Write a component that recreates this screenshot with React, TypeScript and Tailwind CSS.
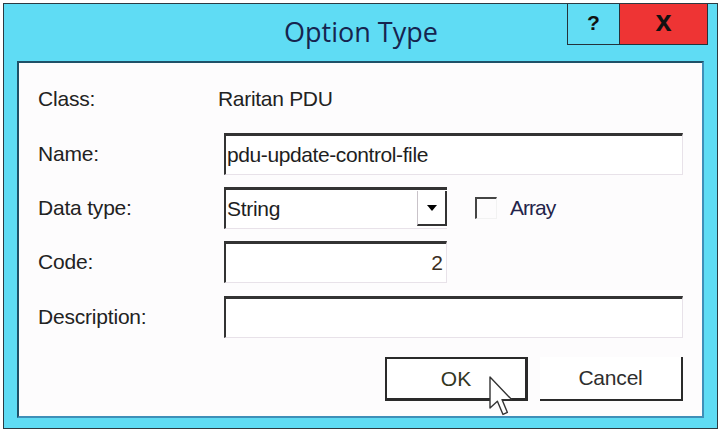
import React from 'react';

const sans = "font-['Liberation_Sans',Arial,sans-serif]";

function Label({ children }: { children: React.ReactNode }) {
  return (
    <div className={`w-[186px] shrink-0 text-[21px] leading-6 text-[#222222] tracking-[-0.2px] ${sans}`}>
      {children}
    </div>
  );
}

// sunken edit box: dark top/left, pale bottom/right
const sunken =
  'h-[42px] flex items-center bg-white border-t-[3px] border-l-2 border-r border-b border-t-[#333333] border-l-[#333333] border-r-[#e8e2e9] border-b-[#e8e2e9]';

export default function App() {
  return (
    <div className="relative w-[720px] h-[431px] bg-white p-[3px]">
      <div className="w-[715px] h-[426px] border border-[#2b3a42] bg-[#5fdcf4] flex flex-col">
        {/* Title bar */}
        <div className="h-[57px] shrink-0 flex">
          <div className="flex-1" />
          <div className="h-full flex items-center pb-[1px] pl-[10px] font-['Open_Sans',sans-serif] text-[27px] text-[#16244f]">
            Option Type
          </div>
          <div className="flex-1 flex justify-end items-start pr-[9px]">
            <div className="w-[52px] h-[41px] flex items-center justify-center border-l border-b border-[#24323a] bg-[#62ddf4]">
              <span className={`text-[21px] font-bold leading-none text-[#111] -mt-[4px] ${sans}`}>?</span>
            </div>
            <div className="w-[89px] h-[41px] flex items-center justify-center border-l border-b border-r border-[#24323a] bg-[#ee3434]">
              <span className={`text-[29px] font-bold leading-none text-[#111] -mt-[6px] ${sans}`}>x</span>
            </div>
          </div>
        </div>

        {/* Client area */}
        <div className="mx-[13px] h-[357px] shrink-0 bg-[#fdfcfd] border-2 border-t-[#1f5168] border-l-[#1f5168] border-r-[#3f8fb8] border-b-[#3f8fb8] px-[19px] flex flex-col">
          <div className="mt-[21px] h-[30px] flex items-center">
            <Label>Class:</Label>
            <div className={`text-[21px] leading-6 text-[#222222] -ml-[6px] tracking-[-0.3px] ${sans}`}>Raritan PDU</div>
          </div>

          <div className="mt-[19px] flex items-center">
            <Label>Name:</Label>
            <div className={`${sunken} flex-1 pl-[1px]`}>
              <span className={`text-[21px] text-[#1e1e1e] tracking-[-0.4px] ${sans}`}>pdu-update-control-file</span>
            </div>
          </div>

          <div className="mt-[12px] flex items-center">
            <Label>Data type:</Label>
            <div className={`${sunken} w-[223px] items-stretch border-r-0`}>
              <div className={`flex-1 flex items-center pl-[1px] text-[21px] text-[#1e1e1e] tracking-[-0.3px] ${sans}`}>String</div>
              <div className="mt-[1px] mb-[2px] w-[30px] flex items-center justify-center border-l border-r-2 border-b-2 border-l-[#c9c3c9] border-r-[#333333] border-b-[#333333] bg-white">
                <div className="w-0 h-0 border-l-[5px] border-r-[5px] border-t-[6px] border-l-transparent border-r-transparent border-t-black" />
              </div>
            </div>
            <div className="ml-[28px] w-[22px] h-[22px] border-t-2 border-l-2 border-r border-b border-t-[#444444] border-l-[#444444] border-r-[#f2f2f2] border-b-[#f2f2f2]" />
            <div className={`ml-[13px] text-[21px] text-[#24244a] tracking-[-1px] ${sans}`}>Array</div>
          </div>

          <div className="mt-[12px] flex items-center">
            <Label>Code:</Label>
            <div className={`${sunken} w-[223px] justify-end pr-[3px]`}>
              <span className={`text-[21px] text-[#3a2e22] ${sans}`}>2</span>
            </div>
          </div>

          <div className="mt-[13px] flex items-center">
            <Label>Description:</Label>
            <div className={`${sunken} flex-1`} />
          </div>

          <div className="mt-[19px] flex justify-end gap-[12px]">
            <div className="w-[143px] h-[44px] flex items-center justify-center bg-white border-t-2 border-l-2 border-r-[3px] border-b-[3px] border-[#2a2a2a]">
              <span className={`text-[21px] text-[#33361f] ${sans}`}>OK</span>
            </div>
            <div className="w-[143px] h-[44px] flex items-center justify-center bg-white border-r-2 border-b-2 border-[#2a2a2a]">
              <span className={`text-[21px] text-[#2e2e2e] tracking-[-0.2px] ${sans}`}>Cancel</span>
            </div>
          </div>
        </div>
      </div>

      {/* mouse pointer over OK */}
      <svg
        className="absolute left-[489px] top-[376px]"
        width="24"
        height="42"
        viewBox="0 0 12 21"
      >
        <path
          d="M0.5 0.5 L0.5 16 L4.2 12.6 L7 19.2 L9.2 18.2 L6.5 11.8 L11.3 11.8 Z"
          fill="#ffffff"
          stroke="#333333"
          strokeWidth="0.7"
          strokeLinejoin="round"
        />
      </svg>
    </div>
  );
}
